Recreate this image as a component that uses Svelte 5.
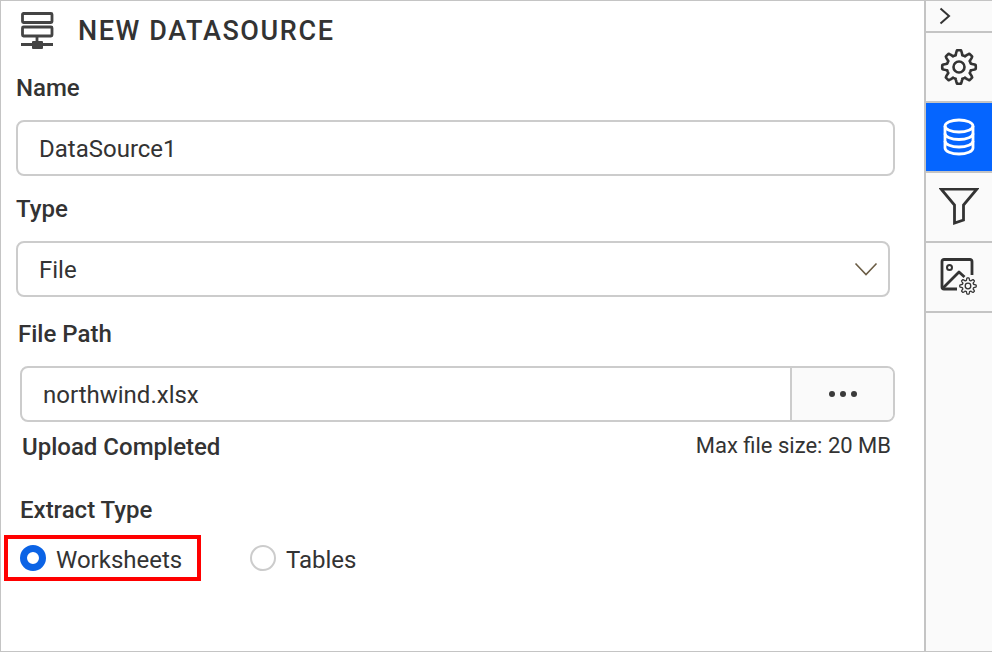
<script>
  let name = "DataSource1";
  let extractType = "worksheets";

  // rounded cog outline, sampled around the circle
  const gearPath = (cx, cy, r, tooth) => {
    let d = "";
    for (let i = 0; i < 160; i++) {
      const a = (i / 160) * Math.PI * 2;
      const wave = Math.max(-1, Math.min(1, 1.7 * Math.cos(8 * a)));
      const len = r + tooth * wave;
      d += `${i ? "L" : "M"}${(cx + len * Math.sin(a)).toFixed(2)} ${(cy - len * Math.cos(a)).toFixed(2)}`;
    }
    return d + "Z";
  };
</script>

<div class="panel">
  <main class="form">
    <header class="title-row">
      <svg class="title-icon" width="40" height="40" viewBox="0 0 40 40" fill="none" stroke="#444" stroke-width="2.8">
        <rect x="3.500" y="2.500" width="29.500" height="9" rx="1" />
        <rect x="3.500" y="16" width="29.500" height="9" rx="1" />
        <path d="M18 25v8M2 33.500h32" />
        <rect x="13" y="30" width="11" height="8" rx="1" fill="#444" stroke="none" />
      </svg>
      <h1>NEW DATASOURCE</h1>
    </header>

    <div class="label name-label">Name</div>
    <div class="box name-box"><span>{name}</span></div>

    <div class="label type-label">Type</div>
    <div class="box type-box">
      <span>File</span>
      <svg width="24" height="14" viewBox="0 0 24 14" fill="none" stroke="#6b5d45" stroke-width="1.600">
        <path d="M1.500 1.500 12 12.500 22.500 1.500" />
      </svg>
    </div>

    <div class="label path-label">File Path</div>
    <div class="box path-box">
      <span class="path-value">northwind.xlsx</span>
      <div class="browse">
        <i></i><i></i><i></i>
      </div>
    </div>

    <div class="upload-row">
      <span class="label">Upload Completed</span>
      <span class="max-size">Max file size: 20 MB</span>
    </div>

    <div class="label extract-label">Extract Type</div>
    <div class="radios">
      <div class="radio-item highlighted">
        <span class="radio" class:on={extractType === "worksheets"}></span>
        <span class="radio-text">Worksheets</span>
      </div>
      <div class="radio-item">
        <span class="radio" class:on={extractType === "tables"}></span>
        <span class="radio-text">Tables</span>
      </div>
    </div>
  </main>

  <aside class="side">
    <div class="tab toggle">
      <svg width="12" height="18" viewBox="0 0 12 18" fill="none" stroke="#333" stroke-width="2">
        <path d="M1.500 1.500 10 9 1.500 16.500" />
      </svg>
    </div>
    <div class="tab">
      <svg width="40" height="40" viewBox="0 0 40 40" fill="none" stroke="#333" stroke-width="2.600" stroke-linejoin="round">
        <circle cx="20" cy="20" r="5.500" />
        <path d={gearPath(20, 20, 14.500, 2.300)} />
      </svg>
    </div>
    <div class="tab active">
      <svg width="34" height="38" viewBox="0 0 34 38" fill="none" stroke="#fff" stroke-width="2.800">
        <ellipse cx="17" cy="8" rx="14" ry="6" />
        <path d="M3 8v22c0 3.300 6.300 6 14 6s14-2.700 14-6V8" />
        <path d="M3 15.500c0 3.300 6.300 6 14 6s14-2.700 14-6M3 23c0 3.300 6.300 6 14 6s14-2.700 14-6" />
      </svg>
    </div>
    <div class="tab">
      <svg width="40" height="38" viewBox="0 1 40 38" fill="none" stroke="#333" stroke-width="2.800" stroke-linejoin="miter">
        <path d="M2 2h36L24.500 18v15l-9 3V18z" />
      </svg>
    </div>
    <div class="tab">
      <svg width="38" height="38" viewBox="0 0 38 38" fill="none" stroke="#333" stroke-width="2.800" stroke-linejoin="round">
        <path d="M32 17V3.500a2 2 0 0 0-2-2H4a2 2 0 0 0-2 2V29a2 2 0 0 0 2 2h13" />
        <circle cx="9.500" cy="9.500" r="2.500" stroke-width="2" />
        <path d="M3 30 19 14l5.500 5" />
        <g stroke-width="1.300">
          <path d={gearPath(28, 28, 7, 1.200)} fill="#fafafa" />
          <circle cx="28" cy="28" r="2.800" />
        </g>
      </svg>
    </div>
  </aside>
</div>

<style>
  :global(body) {
    margin: 0;
    background: #fff;
  }

  .panel {
    display: flex;
    box-sizing: border-box;
    width: 992px;
    height: 652px;
    border: 1px solid #c4c4c4;
    border-right: 0;
    font-family: Roboto, sans-serif;
    color: #333;
    overflow: hidden;
  }

  .form {
    box-sizing: border-box;
    width: 923px;
    padding: 0 28px 0 15px;
    font-size: 24px;
  }

  .title-row {
    display: flex;
    align-items: center;
    height: 60px;
    padding-left: 3px;
  }

  .title-icon {
    margin-right: 19px;
  }

  h1 {
    margin: 0;
    font-size: 27px;
    font-weight: 500;
    letter-spacing: 1.6px;
    white-space: nowrap;
  }

  .label {
    font-weight: 500;
    line-height: 28px;
  }

  .name-label {
    margin-top: 13px;
  }

  .box {
    display: flex;
    align-items: center;
    box-sizing: border-box;
    height: 56px;
    border: 2px solid #ccc;
    border-radius: 8px;
    padding-left: 21px;
  }

  .box > span {
    padding-top: 2px;
  }

  .name-box {
    margin-top: 18px;
    width: 879px;
  }

  .type-label {
    margin-top: 19px;
  }

  .type-box {
    margin-top: 18px;
    width: 874px;
    justify-content: space-between;
    padding-right: 10px;
  }

  .path-label {
    margin: 23px 0 0 2px;
  }

  .path-box {
    margin: 18px 0 0 4px;
    width: 875px;
    padding-left: 21px;
    overflow: hidden;
  }

  .path-value {
    flex: 1;
  }

  .browse {
    display: flex;
    align-items: center;
    justify-content: center;
    gap: 5px;
    width: 101px;
    height: 100%;
    border-left: 2px solid #ccc;
    background: #fafafa;
  }

  .browse i {
    width: 6px;
    height: 6px;
    border-radius: 50%;
    background: #3a3a3a;
  }

  .upload-row {
    display: flex;
    justify-content: space-between;
    align-items: center;
    margin: 11px 0 0 6px;
    width: 869px;
  }

  .max-size {
    font-size: 22px;
    margin-top: -3px;
  }

  .extract-label {
    margin: 35px 0 0 4px;
  }

  .radios {
    display: flex;
    align-items: center;
    gap: 49px;
    margin: 11px 0 0 -12px;
  }

  .radio-item {
    display: flex;
    align-items: center;
    gap: 10px;
    box-sizing: border-box;
    height: 46px;
  }

  .radio-text {
    padding-top: 3px;
  }

  .highlighted {
    border: 4px solid #f00;
    width: 197px;
    padding-left: 12px;
  }

  .radio {
    box-sizing: border-box;
    width: 26px;
    height: 26px;
    border: 2px solid #ccc;
    border-radius: 50%;
    background: #fff;
  }

  .radio.on {
    border: 7.500px solid #0b63e5;
  }

  .side {
    flex: 1;
    border-left: 2px solid #c4c4c4;
    background: #fafafa;
  }

  .tab {
    display: flex;
    align-items: center;
    justify-content: center;
    height: 68px;
    border-bottom: 2px solid #c4c4c4;
  }

  .toggle {
    height: 30px;
    justify-content: flex-start;
    padding-left: 13px;
  }

  .active {
    background: #0565ff;
  }
</style>
